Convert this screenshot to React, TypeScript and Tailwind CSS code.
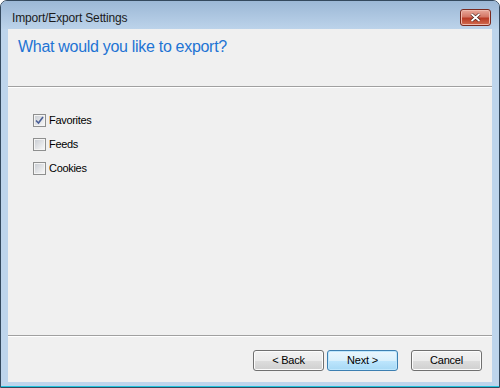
import React from 'react';

const font = { fontFamily: '"Liberation Sans", Arial, sans-serif' };

function CheckBox({ label, checked }: { label: string; checked?: boolean }) {
  return (
    <label className="flex items-center h-[13px] text-[11px] tracking-[-0.3px] text-black">
      <span className="w-[13px] h-[13px] border border-[#8e8f8f] bg-white flex items-center justify-center">
        <span className="w-[11px] h-[11px] border border-[#f4f4f4] bg-gradient-to-br from-[#cbcfd5] to-[#f6f6f6] flex items-center justify-center">
          {checked && (
            <svg width="9" height="9" viewBox="0 0 9 9">
              <path d="M1 4.5 L3.5 7 L8 1" fill="none" stroke="#4a5f97" strokeWidth="1.6" />
            </svg>
          )}
        </span>
      </span>
      <span className="ml-[3px]">{label}</span>
    </label>
  );
}

function WinButton({ children, isDefault }: { children: React.ReactNode; isDefault?: boolean }) {
  return (
    <button
      className={
        isDefault
          ? 'block w-[71px] h-[21px] rounded-[3px] border border-[#3c7fb1] bg-[linear-gradient(#eaf6fd_0%,#d9f0fc_50%,#bee6fd_51%,#a7d9f5_100%)] text-[11px] tracking-[-0.2px] text-black shadow-[inset_0_0_0_1px_#bfe7fd]'
          : 'block w-[71px] h-[21px] rounded-[3px] border border-[#707070] bg-[linear-gradient(#f2f2f2_0%,#ebebeb_50%,#dddddd_51%,#cfcfcf_100%)] text-[11px] tracking-[-0.2px] text-black shadow-[inset_0_0_0_1px_#fcfcfc]'
      }
    >
      {children}
    </button>
  );
}

export default function App() {
  return (
    <div style={font} className="w-[500px] h-[388px] flex flex-col rounded-t-[7px] border border-[#34495e] bg-[#bed5ec] overflow-hidden">
      {/* Title bar */}
      <div className="h-[28px] flex items-start justify-between bg-gradient-to-b from-[#9cb8d6] to-[#bcd3ea]">
        <span className="ml-[11px] mt-[8px] text-[12px] tracking-[-0.15px] text-[#1b1b1b]">Import/Export Settings</span>
        <button className="mt-[8px] mr-[8px] w-[31px] h-[17px] rounded-[3px] border border-[#7a2a1f] bg-[linear-gradient(#e9a99b_0%,#d47766_45%,#b93b25_55%,#d26c4f_100%)] flex items-center justify-center shadow-[inset_0_0_0_1px_#efb9ad]">
          <svg width="11" height="9" viewBox="0 0 11 9">
            <path d="M1.5 1 L9.5 8 M9.5 1 L1.5 8" stroke="#3f1a14" strokeWidth="3" />
            <path d="M1.5 1 L9.5 8 M9.5 1 L1.5 8" stroke="#ffffff" strokeWidth="1.8" />
          </svg>
        </button>
      </div>

      {/* Client area */}
      <div className="mx-[7px] h-[353px] bg-[#f0f0f0] flex flex-col">
        <div className="h-[57px] pl-[10px] pt-[7px]">
          <h1 className="text-[16px] tracking-[-0.3px] text-[#1e74d4] leading-[22px]">What would you like to export?</h1>
        </div>
        <div className="h-px bg-[#a0a0a0]" />
        <div className="h-px bg-white" />

        <div className="flex-1 flex flex-col gap-[11px] pl-[25px] pt-[26px]">
          <CheckBox label="Favorites" checked />
          <CheckBox label="Feeds" />
          <CheckBox label="Cookies" />
        </div>

        <div className="h-px bg-[#a0a0a0]" />
        <div className="h-px bg-white" />
        <div className="h-[45px] flex items-start justify-end gap-[13px] pt-[13px] pr-[10px]">
          <div className="flex gap-[3px]">
            <WinButton>&lt; Back</WinButton>
            <WinButton isDefault>Next &gt;</WinButton>
          </div>
          <WinButton>Cancel</WinButton>
        </div>
      </div>

      {/* Bottom frame */}
      <div className="flex-1 border-b border-[#22c3dd]" />
    </div>
  );
}
